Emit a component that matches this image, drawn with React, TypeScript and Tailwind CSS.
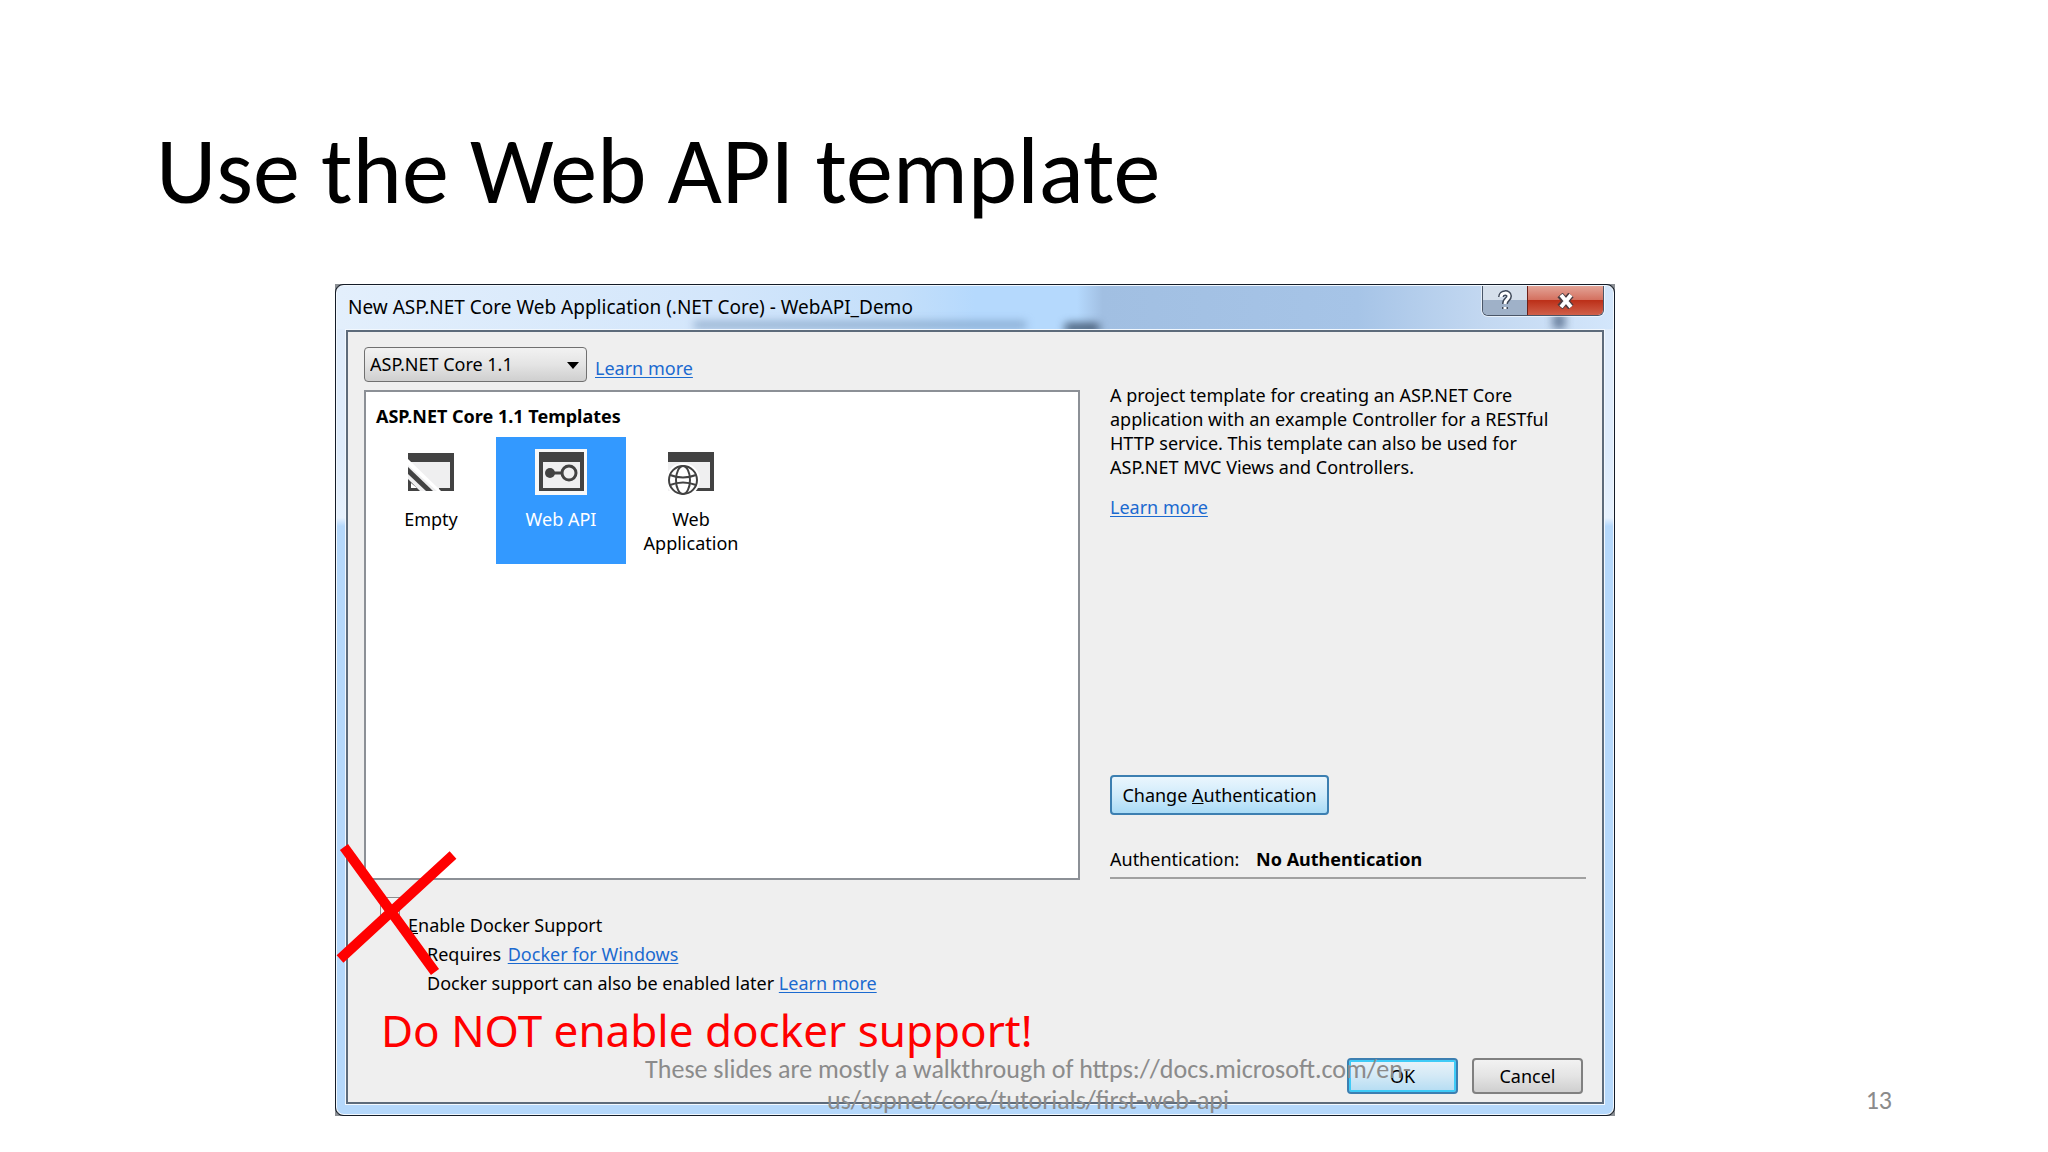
import { useState } from 'react';

const TEMPLATES = [
  { id: 'empty', label: 'Empty', Icon: EmptyIcon },
  { id: 'webapi', label: 'Web API', Icon: WebApiIcon },
  { id: 'webapp', label: 'Web Application', Icon: WebAppIcon },
];

const linkClass = 'text-[#1b6ad0] underline decoration-1 underline-offset-2';

function EmptyIcon() {
  return (
    <svg className="w-[52px] h-[46px]" viewBox="0 0 52 46">
      <path d="M3 4h46v38H3z" fill="#efeff0" />
      <path d="M3 4h46v38H34v-3h11V13H3z" fill="#424242" />
      <path d="M3 30v12h12z" fill="#424242" />
      <path d="M6 34v5h6z" fill="#fff" />
      <path d="M3 10l33 32h-4L3 16z" fill="#fff" />
      <path d="M3 18l25 24h-7L3 25z" fill="#424242" />
    </svg>
  );
}

function WebApiIcon() {
  return (
    <svg className="w-[52px] h-[46px]" viewBox="0 0 52 46">
      <path d="M0 0h52v46H0z" fill="#f8f8f8" />
      <path d="M4 3h45v39H4z" fill="#424242" />
      <path d="M8 13h37v26H8z" fill="#efeff0" />
      <circle cx="15" cy="24" r="5" fill="#424242" />
      <path d="M15 24h13" stroke="#424242" strokeWidth="3" />
      <circle cx="34" cy="24" r="7" fill="none" stroke="#424242" strokeWidth="3" />
    </svg>
  );
}

function WebAppIcon() {
  return (
    <svg className="w-[52px] h-[46px]" viewBox="0 0 52 46">
      <path d="M3 4h46v38H3z" fill="#efeff0" />
      <path d="M3 3h46v39H30v-3h15V13H3z" fill="#424242" />
      <circle cx="18" cy="31" r="17" fill="#fff" />
      <g fill="none" stroke="#424242" strokeWidth="2">
        <circle cx="18" cy="31" r="14" />
        <ellipse cx="18" cy="31" rx="7" ry="14" />
        <path d="M5 26c8 3 18 3 26 0M5 36c8-3 18-3 26 0" />
      </g>
    </svg>
  );
}

function TitleBar() {
  return (
    <div className="relative h-[43px] flex items-start justify-between overflow-hidden bg-[linear-gradient(to_right,#e3effc_0%,#d3e6fb_30%,#c4dffa_44%,#b5d9fd_50%,#b5d9fd_58%,#a1bfe2_60%,#a6c4e7_80%,#c3d8f1_90%,#d3e6fb_100%)]">
      {/* Shapes behind the glass */}
      <span className="absolute left-[28%] bottom-0 w-[26%] h-2 bg-[#6d8db5]/60 blur-xs" />
      <span className="absolute left-[57%] -bottom-1 w-9 h-2.5 rounded-full bg-[#2c4058]/80 blur-xs" />
      <span className="absolute right-[48px] bottom-0 w-3 h-4 bg-[#4d6484]/80 blur-xs" />
      <h2 className="relative pl-[11px] pt-[9px] text-[19px] leading-6">New ASP.NET Core Web Application (.NET Core) - WebAPI_Demo</h2>
      <div className="relative flex h-[30px] mr-[9px] rounded-b-md border border-t-0 border-[#4a5668] ring-1 ring-white/60 overflow-hidden">
        <button aria-label="Help" className="w-[45px] flex items-center justify-center bg-linear-to-b from-[#d5dfeb] from-50% to-[#9fb1c8] to-50% border-r border-[#6b2018]">
          <svg className="w-4 h-6" viewBox="0 0 16 24">
            <path d="M4 8c0-5 8-5 8-1 0 4-4 3-4 8M8 18v2" fill="none" stroke="#3f4959" strokeWidth="6" />
            <path d="M4 8c0-5 8-5 8-1 0 4-4 3-4 8M8 18v2" fill="none" stroke="#fff" strokeWidth="3" />
          </svg>
        </button>
        <button aria-label="Close" className="w-[75px] flex items-center justify-center bg-[linear-gradient(to_bottom,#e3a497,#d4705f_48%,#bc3019_50%,#d0604a)]">
          <svg className="w-5 h-4" viewBox="0 0 20 16">
            <path d="M4 2l11 12M15 2L4 14" stroke="#4c3c40" strokeWidth="7" />
            <path d="M5 2l10 12M15 2L5 14" stroke="#fff" strokeWidth="4" />
          </svg>
        </button>
      </div>
    </div>
  );
}

export default function App() {
  const [selected, setSelected] = useState('webapi');

  return (
    <main className="relative min-h-screen bg-white text-black font-['Noto_Sans','Open_Sans',sans-serif] overflow-hidden">
      <h1 className="pt-[114px] pl-[156px] pb-[56px] text-[94px] leading-[114px] font-['Carlito','Lato',sans-serif]">Use the Web API template</h1>

      {/* Dialog */}
      <section className="relative w-5/8 ml-[335px] bg-[#8b8f94]">
        <div className="border border-[#141c28] rounded-lg overflow-hidden">
          <div className="border border-[#f2f8fe] rounded-lg overflow-hidden bg-linear-to-b from-[#dfecfb] from-20% via-[#e6f1fd] via-28% to-[#b5d8fb] to-29%">
            <TitleBar />
            <div className="mx-2 mb-[9px] border border-[#f2f8fe]">
              <div className="h-[774px] border-2 border-[#5d6b7b] bg-[#efefef] flex text-[18px] leading-6">
                {/* Left column */}
                <div className="w-[732px] pl-4 pt-[15px] flex flex-col">
                  <div className="flex items-center gap-2">
                    <div className="relative w-[223px]">
                      <select aria-label="Framework version" className="appearance-none w-full h-[35px] pl-[5px] pb-0.5 rounded-sm border border-[#707070] bg-linear-to-b from-[#f2f2f2] via-[#e4e4e4] via-50% to-[#cfcfcf]">
                        <option>ASP.NET Core 1.1</option>
                      </select>
                      <svg className="absolute right-2 top-[15px] w-3 h-2 pointer-events-none" viewBox="0 0 12 8">
                        <path d="M0 0h12L6 7z" />
                      </svg>
                    </div>
                    <a href="#" className={`${linkClass} pt-1.5`}>Learn more</a>
                  </div>
                  <div className="mt-2 h-[490px] border-2 border-[#8c9096] bg-white pt-3">
                    <h3 className="pl-2.5 font-bold">ASP.NET Core 1.1 Templates</h3>
                    <div className="flex mt-[9px]">
                      {TEMPLATES.map(({ id, label, Icon }) => (
                        <button
                          key={id}
                          onClick={() => setSelected(id)}
                          className={`w-[130px] h-[127px] px-3 pt-3 flex flex-col items-center ${selected === id ? 'bg-[#3399ff] text-white' : ''}`}
                        >
                          <Icon />
                          <span className="mt-3">{label}</span>
                        </button>
                      ))}
                    </div>
                  </div>
                  <div className="pl-4 pt-[17px]">
                    <label className="flex items-start gap-2">
                      <input type="checkbox" className="appearance-none w-5 h-5 border border-[#8e8f8f] bg-[#f4f4f4]" />
                      <span className="pt-4"><u>E</u>nable Docker Support</span>
                    </label>
                    <p className="pl-[47px] pt-[5px]">Requires <a href="#" className={`${linkClass} ml-0.5`}>Docker for Windows</a></p>
                    <p className="pl-[47px] pt-[5px]">Docker support can also be enabled later <a href="#" className={linkClass}>Learn more</a></p>
                  </div>
                  <p className="pl-[17px] pt-[5px] text-[44px] leading-[60px] text-[#ff0000]">Do NOT enable docker support!</p>
                </div>

                {/* Right column */}
                <div className="flex-1 pl-[30px] pr-4 pt-[51px] pb-2 flex flex-col">
                  <p className="max-w-[450px]">A project template for creating an ASP.NET Core application with an example Controller for a RESTful HTTP service. This template can also be used for ASP.NET MVC Views and Controllers.</p>
                  <p className="pt-4"><a href="#" className={linkClass}>Learn more</a></p>
                  <button className="mt-[256px] w-[219px] h-10 rounded-sm border-2 border-[#3c7fb1] bg-linear-to-b from-[#eaf6fd] via-[#d0ebfb] via-50% to-[#a9dbf6]">Change <u>A</u>uthentication</button>
                  <p className="mt-8 pb-1.5 border-b-2 border-[#a0a0a0]">Authentication: <b className="ml-3">No Authentication</b></p>
                  <div className="mt-auto pr-[3px] flex justify-end gap-3.5">
                    <button className="w-[111px] h-9 rounded-sm border-2 border-[#3c7fb1] ring-2 ring-inset ring-[#3fcbf7] bg-linear-to-b from-[#eaf3f9] via-[#d3e9f6] via-50% to-[#b3dcf3]">OK</button>
                    <button className="w-[111px] h-9 rounded-sm border-2 border-[#808080] bg-linear-to-b from-[#f2f2f2] via-[#e4e4e4] via-50% to-[#cfcfcf]">Cancel</button>
                  </div>
                </div>
              </div>
            </div>
          </div>
        </div>

        {/* Red cross over the docker checkbox */}
        <svg className="absolute left-0 top-[556px] w-[130px] h-[140px] pointer-events-none" viewBox="0 0 130 140">
          <path d="M9 7l91 125M118 15L5 119" stroke="#ff0000" strokeWidth="10" fill="none" />
        </svg>
      </section>

      {/* Slide footer */}
      <footer className="absolute inset-x-0 bottom-[36px] flex justify-center items-end font-['Carlito','Lato',sans-serif] text-[26px] leading-[31px] text-[#8b8b8b]">
        <p className="pl-2 text-center">
          These slides are mostly a walkthrough of https://docs.microsoft.com/en-
          <br />
          us/aspnet/core/tutorials/first-web-api
        </p>
        <span className="absolute right-[156px]">13</span>
      </footer>
    </main>
  );
}
